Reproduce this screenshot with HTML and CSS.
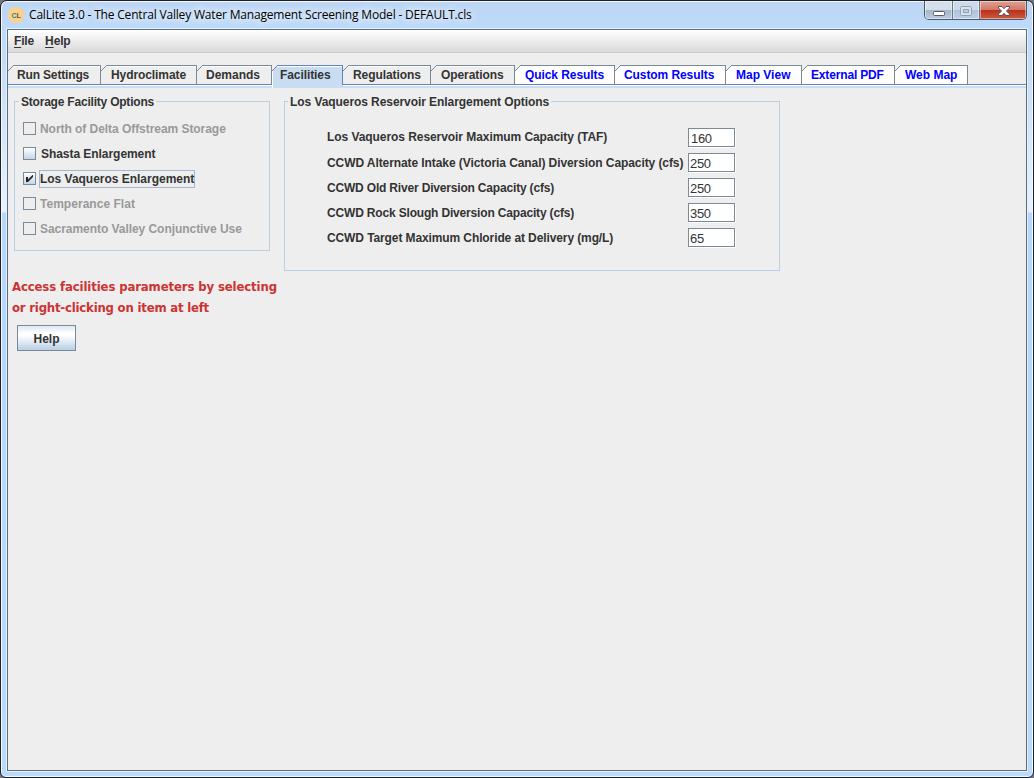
FILE: index.html
```html
<!DOCTYPE html>
<html lang="en">
<head>
<meta charset="utf-8">
<title>CalLite 3.0</title>
<link rel="stylesheet" href="styles.css">
</head>
<body>
<div class="window">
  <header class="titlebar">
    <svg class="logo" width="16" height="16" viewBox="0 0 16 16"><circle cx="8" cy="8" r="8" fill="#ffd08a"/><text x="3.500" y="10.500" class="logo-text">C<tspan fill="#555">L</tspan></text></svg>
    <span class="title">CalLite 3.0 - The Central Valley Water Management Screening Model - DEFAULT.cls</span>
    <div class="controls">
      <span class="ctl min"><svg width="28" height="18"><rect x="8.500" y="10.500" width="11" height="4" rx="1" fill="#fff" stroke="#555b66"/></svg></span>
      <span class="ctl max"><svg width="26" height="18"><rect x="7.500" y="5.500" width="11" height="9" rx="1" fill="#d7e2ee" stroke="#93a3b6"/><rect x="10.500" y="8.500" width="5" height="3" fill="#b9cadd" stroke="#93a3b6"/></svg></span>
      <span class="ctl close"><svg width="46" height="18"><path d="M18.500 5.500h3.500l2 2.200 2-2.200h3.500v1.500l-3 3 3 3v1.500h-3.500l-2-2.200-2 2.200h-3.500v-1.500l3-3-3-3z" fill="#fff" stroke="#5d4a50"/></svg></span>
    </div>
  </header>
  <main class="client">
    <nav class="menubar"><span><u>F</u>ile</span><span><u>H</u>elp</span></nav>
    <div class="tabs">
      <div class="tab t1"><i></i><b>Run Settings</b></div>
      <div class="tab t2"><i></i><b>Hydroclimate</b></div>
      <div class="tab t3"><i></i><b>Demands</b></div>
      <div class="tab t4 active"><i></i><b>Facilities</b></div>
      <div class="tab t5"><i></i><b>Regulations</b></div>
      <div class="tab t6"><i></i><b>Operations</b></div>
      <div class="tab t7 link"><i></i><b>Quick Results</b></div>
      <div class="tab t8 link"><i></i><b>Custom Results</b></div>
      <div class="tab t9 link"><i></i><b>Map View</b></div>
      <div class="tab t10 link"><i></i><b>External PDF</b></div>
      <div class="tab t11 link"><i></i><b>Web Map</b></div>
    </div>
    <div class="panels">
      <section class="group storage">
        <h2>Storage Facility Options</h2>
        <div class="check off"><span class="box"></span><label>North of Delta Offstream Storage</label></div>
        <div class="check shasta"><span class="box"></span><label>Shasta Enlargement</label></div>
        <div class="check focus"><span class="box"><svg width="11" height="11"><path d="M2 4h2v2.500L8.500 2H9v2L4 9H2z" fill="#222"/></svg></span><label>Los Vaqueros Enlargement</label></div>
        <div class="check off temperance"><span class="box"></span><label>Temperance Flat</label></div>
        <div class="check off"><span class="box"></span><label>Sacramento Valley Conjunctive Use</label></div>
      </section>
      <section class="group options">
        <h2>Los Vaqueros Reservoir Enlargement Options</h2>
        <div class="row r1"><label>Los Vaqueros Reservoir Maximum Capacity (TAF)</label><span class="field">160</span></div>
        <div class="row r2"><label>CCWD Alternate Intake (Victoria Canal) Diversion Capacity (cfs)</label><span class="field">250</span></div>
        <div class="row r3"><label>CCWD Old River Diversion Capacity (cfs)</label><span class="field">250</span></div>
        <div class="row r4"><label>CCWD Rock Slough Diversion Capacity (cfs)</label><span class="field">350</span></div>
        <div class="row r5"><label>CCWD Target Maximum Chloride at Delivery (mg/L)</label><span class="field">65</span></div>
      </section>
    </div>
    <p class="hint"><span>Access facilities parameters by selecting</span><br><span class="second">or right-clicking on item at left</span></p>
    <div class="button">Help</div>
  </main>
</div>
</body>
</html>
```
FILE: styles.css
```css
*, *::before, *::after { box-sizing: border-box; }
body { margin: 0; background: #70757c; font: bold 12px "Liberation Sans", Arial, sans-serif; color: #333; }
.window { width: 1034px; height: 778px; border: 1px solid #1c202a; border-radius: 7px 7px 6px 6px; padding: 0 6px 6px; overflow: hidden;
  box-shadow: inset 0 0 0 1px #f4faff;
  background: linear-gradient(#bcd6f3 0, #bddafa 30px, #cfe3f8 110px, #e9f2fc 211px, #b4d7fb 212px, #b9dafa 100%); }
.titlebar { height: 28px; display: flex; align-items: flex-start; padding-left: 1px; }
.logo { margin-top: 6px; flex: none; }
.logo-text { font: bold 7px "Liberation Sans", Arial, sans-serif; fill: #128a90; }
.title { margin: 5px 0 0 5px; font: 12px/17px "Open Sans", "Noto Sans", sans-serif; letter-spacing: -0.18px; color: #000; white-space: nowrap; text-shadow: 0 0 8px #fff, 0 0 8px #fff; }
.controls { margin: 0 0 0 auto; display: flex; height: 19px; border: 1px solid #4c5a6b; border-top: 0; border-radius: 0 0 5px 5px; overflow: hidden; }
.ctl { height: 18px; border-right: 1px solid #6c7a8c; box-shadow: inset 0 0 0 1px rgba(255,255,255,.45); }
.ctl svg { display: block; }
.min { width: 28px; background: linear-gradient(#d5dfeb 0 9px, #a4b5ca 9px, #bccbdd); }
.max { width: 27px; background: linear-gradient(#cbdbec 0 9px, #aec2da 9px, #bfd1e6); }
.close { width: 46px; border-right: 0; background: linear-gradient(#e3a091, #cf7767 9px, #b8301b 9px, #cd5a3d); }
.client { height: 742px; border: 1px solid #5d6d7e; background: #eee; box-shadow: 0 0 0 1px #e3f1ff; }
.menubar { height: 23px; display: flex; gap: 11px; padding: 4px 6px 0; line-height: 15px; border-bottom: 1px solid #ccc; background: linear-gradient(#fff, #dadada); letter-spacing: -.15px; }
.menubar u { text-underline-offset: 2px; }
.tabs { height: 35px; padding-top: 12px; display: flex; position: relative; }
.tabs::after { content: ""; position: absolute; left: 0; right: 0; bottom: 0; height: 4px; border-top: 1px solid #6382bf; background: linear-gradient(#fff 0 1px, #c8ddf2 1px); }
.tab { position: relative; height: 20px; border-top: 1px solid #7a8a99; border-right: 1px solid #7a8a99; box-shadow: inset 0 1px #fff; white-space: nowrap; padding: 2px 0 0 8px; line-height: 15px; letter-spacing: -.08px; }
.tab i { position: absolute; left: 0; top: -1px; width: 6px; height: 6px; background: linear-gradient(135deg, #eee 0 3.7px, #7a8a99 3.7px 4.7px, transparent 4.7px); }
.tab.link { background: #fff; color: #00f; }
.tab.active { z-index: 2; height: 23px; background: #c8ddf2; border-color: #6382bf; border-right: 0; box-shadow: inset 1px 1px #fff; }
.tab.active::after { content: ""; position: absolute; right: 0; top: -1px; width: 1px; height: 20px; background: #6382bf; }
.tab b { display: inline-block; }
.t1 { width: 93px; padding-left: 9px; letter-spacing: -.16px; } .t2 { width: 96px; padding-left: 10px; } .t3 { width: 75px; padding-left: 9px; letter-spacing: 0; } .t4 { width: 71px; }
.t5 { width: 88px; padding-left: 10px; } .t6 { width: 84px; padding-left: 10px; } .t7 { width: 100px; padding-left: 10px; } .t8 { width: 111px; padding-left: 9px; }
.t9 { width: 76px; padding-left: 10px; letter-spacing: 0; } .t10 { width: 93px; padding-left: 9px; letter-spacing: -.16px; } .t11 { width: 73px; padding-left: 10px; letter-spacing: 0; }
.panels { display: flex; align-items: flex-start; gap: 14px; padding: 13px 0 0 6px; }
.group { border: 1px solid #b8cfe5; height: 150px; }
.group h2 { margin: -8px 0 0 4px; width: max-content; padding: 0 2px; background: #eee; font: inherit; line-height: 16px; letter-spacing: -.21px; }
.storage { width: 256px; }
.options { width: 496px; height: 170px; }
.check { height: 25px; display: flex; align-items: center; padding-left: 8px; letter-spacing: -.05px; }
.storage h2 { margin-bottom: 6px; }
.box { width: 13px; height: 13px; border: 1px solid #7a8a99; background: linear-gradient(#fff, #c3d6e9); }
.box svg { display: block; }
.check label { margin-left: 3px; line-height: 16px; border: 1px solid transparent; margin-right: auto; }
.check.shasta label { padding-left: 1px; }
.check.temperance { letter-spacing: .03px; }
.check.off { color: #999; }
.off .box { background: none; }
.check.focus { letter-spacing: -.02px; }
.check.focus label { border-color: #a3b8cc; }
.options h2 { margin-left: 3px; margin-bottom: 14px; letter-spacing: -.07px; }
.row { height: 25px; display: flex; align-items: flex-start; padding: 4px 0 0 42px; }
.row label { width: 361px; line-height: 17px; margin-top: 2px; white-space: nowrap; }
.r1 label { margin-top: 1px; letter-spacing: -.065px; }
.r2 label { letter-spacing: -.08px; }
.r3 label { letter-spacing: -.18px; }
.r4 label { letter-spacing: -.17px; }
.r5 label { letter-spacing: -.105px; }
.field { width: 47px; height: 19px; border: 1px solid #7a8a99; background: #fff; box-shadow: 1px 1px #fff; font-weight: normal; font-size: 13px; line-height: 19px; padding-left: 1px; letter-spacing: -.3px; }
.r1 .field { padding-left: 2px; line-height: 20px; }
.hint { margin: 5px 0 0 4px; font: bold 13px/21px "DejaVu Sans Condensed", "DejaVu Sans", Verdana, sans-serif; color: #cc3333; white-space: nowrap; letter-spacing: -.12px; }
.hint .second { letter-spacing: -.2px; }
.button { margin: 7px 0 0 9px; width: 59px; height: 26px; border: 1px solid #7a8a99; text-align: center; line-height: 26px; background: linear-gradient(#dde8f3, #fff 30%, #fff 40%, #b8cfe5); }
```
